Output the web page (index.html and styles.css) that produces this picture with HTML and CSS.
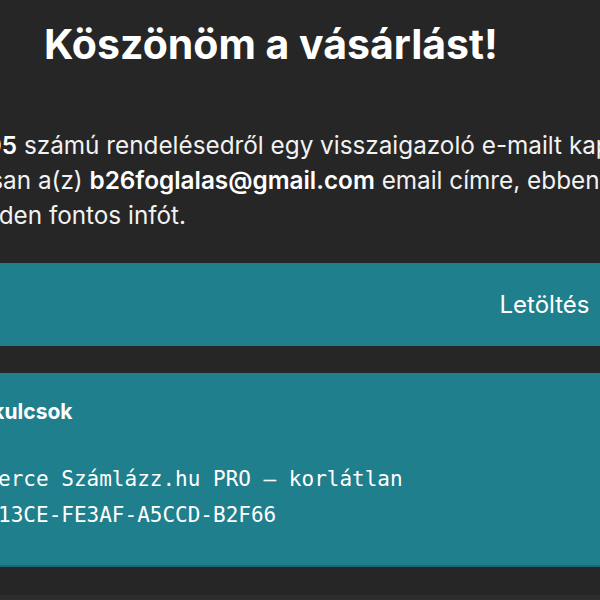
FILE: index.html
```html
<!DOCTYPE html>
<html lang="hu">
<head>
<meta charset="utf-8">
<title>Köszönöm a vásárlást!</title>
<link rel="stylesheet" href="styles.css">
</head>
<body>
<main class="page">
  <h1 class="title">Köszönöm a vásárlást!</h1>
  <p class="lead">
    <span class="line">Az <b>#7205</b> számú rendelésedről egy visszaigazoló e-mailt kapsz</span>
    <span class="line">hamarosan a(z) <b>b26foglalas@gmail.com</b> email címre, ebben benne</span>
    <span class="line">lesz minden fontos infót.</span>
  </p>
  <section class="card card-download">
    <a class="download-link" href="#">Letöltés</a>
  </section>
  <section class="card card-keys">
    <h2 class="keys-title">Licenckulcsok</h2>
    <div class="code">
      <div class="code-line">Commerce Számlázz.hu PRO – korlátlan</div>
      <div class="code-line">9F0A13CE-FE3AF-A5CCD-B2F66</div>
    </div>
  </section>
</main>
<footer class="footer"></footer>
</body>
</html>
```

FILE: styles.css
```css
html, body {
  margin: 0;
  padding: 0;
  background: #262626;
}
body {
  width: 600px;
  height: 600px;
  overflow: hidden;
  display: flex;
  flex-direction: column;
  font-family: Inter, "Noto Sans", sans-serif;
  color: #ffffff;
}
.page {
  margin-left: -120px;
  width: 737px;
  display: flex;
  flex-direction: column;
  flex: none;
}
.title {
  margin: 20px 0 0 164px;
  font-size: 41px;
  line-height: 48px;
  font-weight: 700;
  white-space: nowrap;
}
.lead {
  margin: 60px 0 0 0;
  padding-left: 24px;
  font-size: 24.3px;
  line-height: 35px;
  color: #f2f2f2;
}
.lead .line {
  display: block;
  white-space: nowrap;
}
.lead b {
  color: #ffffff;
  font-weight: 600;
}
.card {
  background: #207f8c;
  padding: 0 27.5px 0 44.5px;
}
.card-download {
  margin-top: 30px;
  height: 83px;
  display: flex;
  align-items: center;
  justify-content: flex-end;
}
.download-link {
  color: #ffffff;
  text-decoration: none;
  font-size: 24px;
}
.card-keys {
  margin-top: 27px;
  padding-top: 24px;
  padding-bottom: 32px;
  border-bottom: 2px solid #1a6a75;
}
.keys-title {
  margin: 0;
  font-size: 21px;
  line-height: 30px;
  font-weight: 700;
}
.code {
  margin-top: 34px;
  padding-left: 23px;
  font-family: "DejaVu Sans Mono", "Liberation Mono", monospace;
  font-size: 21px;
  line-height: 36px;
  white-space: nowrap;
}
.footer {
  margin-top: 28px;
  flex: 1;
  background: #2e2e2e;
}
```
